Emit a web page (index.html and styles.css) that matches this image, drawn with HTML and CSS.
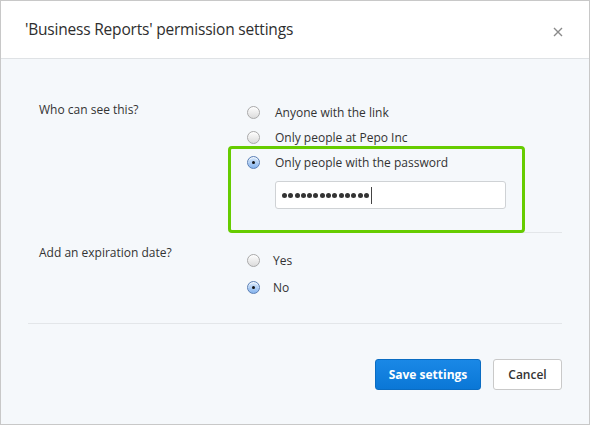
FILE: index.html
```html
<!DOCTYPE html>
<html>
<head>
<meta charset="utf-8">
<link rel="stylesheet" href="styles.css">
</head>
<body>
<div class="dialog">
  <div class="header">
    <h1 class="title">'Business Reports' permission settings</h1>
    <svg class="close" width="10" height="10" viewBox="0 0 10 10"><path d="M1 1L9 9M9 1L1 9" stroke="#8a8a8a" stroke-width="1.4" fill="none"/></svg>
  </div>
  <div class="content">
    <div class="section first">
      <div class="label">Who can see this?</div>
      <div class="options">
        <div class="opt"><span class="radio"></span><span>Anyone with the link</span></div>
        <div class="opt"><span class="radio"></span><span>Only people at Pepo Inc</span></div>
        <div class="opt"><span class="radio on"></span><span>Only people with the password</span></div>
        <div class="pw"><span class="dots"><i></i><i></i><i></i><i></i><i></i><i></i><i></i><i></i><i></i><i></i><i></i><i></i><i></i><i></i></span><span class="caret"></span></div>
      </div>
    </div>
    <div class="section second">
      <div class="label label2">Add an expiration date?</div>
      <div class="options options2">
        <div class="opt opt2"><span class="radio"></span><span>Yes</span></div>
        <div class="opt opt2"><span class="radio on"></span><span>No</span></div>
      </div>
    </div>
    <div class="footer">
      <button class="btn primary">Save settings</button>
      <button class="btn secondary">Cancel</button>
    </div>
  </div>
  <div class="highlight"></div>
</div>
</body>
</html>
```
FILE: styles.css
```css
* { box-sizing: border-box; }
html, body { margin: 0; padding: 0; }
body { width: 590px; height: 425px; overflow: hidden; font-family: "Open Sans", "Liberation Sans", sans-serif; color: #333; }
.dialog { position: relative; width: 590px; height: 425px; border: 1px solid #c8c8c8; background: #f5f8fb; }
.header { height: 58px; background: #fff; border-bottom: 1px solid #dfe2e5; display: flex; align-items: center; justify-content: space-between; padding: 0 26px 0 24px; }
.title { margin: 0; font-size: 15.5px; font-weight: 400; color: #2e2e2e; letter-spacing: -0.2px; padding-bottom: 2px; }
.close { display: block; margin-top: 4px; }
.content { padding: 0 27px 0 27px; }
.section { display: flex; }
.label { width: 210px; padding: 42px 0 0 11px; font-size: 12px; line-height: 18px; }
.options { flex: 1; padding: 41px 0 23px 9px; border-bottom: 1px solid #e3e6e9; }
.opt { display: flex; align-items: center; height: 25px; font-size: 12px; }
.radio { width: 13px; height: 13px; border-radius: 50%; border: 1px solid #a9a9a9; background: linear-gradient(#fdfdfd, #dcdcdc); margin-right: 15px; position: relative; box-shadow: inset 0 1px 1px rgba(255,255,255,0.8); flex: none; }
.radio.on { border-color: #5a7fb5; background: linear-gradient(#d9e9fb, #86b4ee); }
.radio.on::after { content: ""; position: absolute; left: 4px; top: 4px; width: 3px; height: 3px; border-radius: 50%; background: #111; }
.pw { margin: 6px 56px 0 28px; height: 28px; background: #fff; border: 1px solid #cfd2d5; border-radius: 3px; display: flex; align-items: center; padding-left: 6px; }
.dots { display: flex; gap: 1.3px; }
.dots i { display: block; width: 5px; height: 5px; border-radius: 50%; background: #333; }
.caret { width: 1px; height: 17px; background: #444; margin-left: 2px; }
.second { border-bottom: 1px solid #e3e6e9; }
.label2 { padding-top: 11px; }
.options2 { border-bottom: none; padding: 14px 0 22px 9px; }
.opt2 { height: 27px; }
.opt2 .radio { margin-right: 13px; }
.footer { display: flex; justify-content: flex-end; gap: 12px; padding-top: 35px; padding-right: 0; }
.btn { height: 31px; border-radius: 3px; font-family: "Open Sans", "Liberation Sans", sans-serif; font-size: 12px; font-weight: 700; cursor: pointer; }
.primary { width: 106px; color: #fff; background: linear-gradient(#1a88e6, #0a77d6); border: 1px solid #0a6cc2; }
.secondary { width: 69px; color: #333; background: #fff; border: 1px solid #c9c9c9; font-weight: 600; }
.highlight { position: absolute; left: 227px; top: 145px; width: 297px; height: 87px; border: 3px solid #66cc00; border-radius: 4px; pointer-events: none; }
```
